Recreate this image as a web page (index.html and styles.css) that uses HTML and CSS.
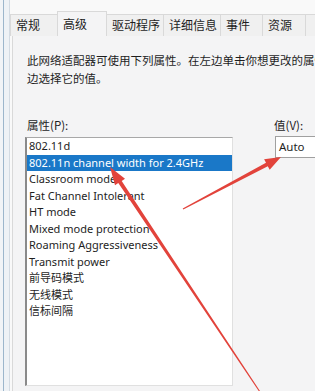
FILE: index.html
```html
<!DOCTYPE html>
<html lang="zh-CN">
<head>
<meta charset="utf-8">
<title>高级</title>
<link rel="stylesheet" href="styles.css">
</head>
<body>
<div class="screen">
  <div class="edge"></div>
  <div class="dialog">
    <div class="tabs">
      <div class="tab">常规</div>
      <div class="tab active">高级</div>
      <div class="tab">驱动程序</div>
      <div class="tab">详细信息</div>
      <div class="tab">事件</div>
      <div class="tab">资源</div>
      <div class="tab"></div>
    </div>
    <div class="panel">
      <p class="desc">此网络适配器可使用下列属性。在左边单击你想更改的属性，然后在右<br>边选择它的值。</p>
      <div class="props">
        <div class="col">
          <div class="label">属性(P):</div>
          <ul class="list">
            <li>802.11d</li>
            <li class="selected">802.11n channel width for 2.4GHz</li>
            <li>Classroom mode</li>
            <li>Fat Channel Intolerant</li>
            <li>HT mode</li>
            <li>Mixed mode protection</li>
            <li>Roaming Aggressiveness</li>
            <li>Transmit power</li>
            <li>前导码模式</li>
            <li>无线模式</li>
            <li>信标间隔</li>
          </ul>
        </div>
        <div class="col">
          <div class="label">值(V):</div>
          <div class="combo">Auto</div>
        </div>
      </div>
    </div>
  </div>
  <svg class="arrows" width="315" height="391" viewBox="0 0 315 391">
    <polygon fill="#e2433b" points="110,167 125,178.7 121.7,180.9 262.4,394.7 261.6,395.3 118.3,183.1 115,185.3"/>
    <polygon fill="#e2433b" points="281,157 269.7,169.8 267.8,166.3 183.3,209.6 182.7,208.4 266,162.7 264.1,159.2"/>
  </svg>
</div>
</body>
</html>
```
FILE: styles.css
```css
html, body {
  margin: 0;
  padding: 0;
}
body {
  width: 315px;
  height: 391px;
  overflow: hidden;
  background: #f9f9f9;
  font-family: "Noto Sans", "Noto Sans CJK SC", sans-serif;
  color: #1e1e1e;
}
.screen {
  position: relative;
  display: flex;
  width: 315px;
  height: 391px;
  overflow: hidden;
}
.edge {
  flex: none;
  width: 10px;
  background: linear-gradient(to right, #f1f4f7 0, #f1f4f7 3px, #9cb6cc 3px, #9cb6cc 4px, #eef2f6 4px, #eef2f6 9px, #d3dbe3 9px, #d3dbe3 10px);
}
.dialog {
  flex: none;
  width: 360px;
  padding-top: 11px;
  display: flex;
  flex-direction: column;
}
.tabs {
  display: grid;
  grid-template-columns: 47px 50px 56px 57px 42px 43px 60px;
  align-items: end;
  height: 24px;
  position: relative;
  z-index: 1;
  margin-bottom: -1px;
}
.tab {
  box-sizing: border-box;
  height: 22px;
  border: 1px solid #d9d9d9;
  border-right: none;
  border-bottom: none;
  background: #f0f0f0;
  font-family: "Noto Sans CJK SC", sans-serif;
  font-size: 12px;
  line-height: 20px;
  padding-left: 5px;
  white-space: nowrap;
}
.tab.active {
  height: 25px;
  background: #f4f4f5;
  border-right: 1px solid #d9d9d9;
  line-height: 24px;
  padding-left: 5px;
}
.tab.active + .tab {
  border-left: none;
}
.panel {
  margin-left: 2px;
  flex: 1;
  background: #f4f4f5;
  border-top: 1px solid #d9d9d9;
  border-left: 1px solid #d9d9d9;
  padding: 16px 0 0 14px;
}
.desc {
  margin: 0;
  font-family: "Noto Sans CJK SC", sans-serif;
  font-size: 11.5px;
  line-height: 18px;
  white-space: nowrap;
}
.props {
  margin: 30px 0 0 -2px;
  display: grid;
  grid-template-columns: 208px 100px;
  column-gap: 39px;
}
.col {
  display: flex;
  flex-direction: column;
}
.label {
  font-family: "Noto Sans CJK SC", sans-serif;
  font-size: 11.5px;
  line-height: 16px;
  padding-left: 2px;
}
.list {
  list-style: none;
  margin: 4px 0 0 0;
  padding: 0;
  box-sizing: border-box;
  height: 249px;
  background: #ffffff;
  border-top: 1px solid #a8a8a8;
  border-left: 2px solid #8a8a8a;
  border-right: 1px solid #e0e0e0;
  border-bottom: 1px solid #e0e0e0;
}
.list li {
  height: 16.5px;
  line-height: 16.5px;
  padding-left: 2px;
  font-size: 11px;
  white-space: nowrap;
  overflow: hidden;
}
.list li.selected {
  background: #1a78c8;
  color: #ffffff;
}
.combo {
  margin: 3px 0 0 3px;
  box-sizing: border-box;
  height: 22px;
  background: #ffffff;
  border: 1px solid #a0a0a0;
  padding-left: 3px;
  font-size: 11.5px;
  line-height: 20px;
}
.arrows {
  position: absolute;
  left: 0;
  top: 0;
  pointer-events: none;
}
```
